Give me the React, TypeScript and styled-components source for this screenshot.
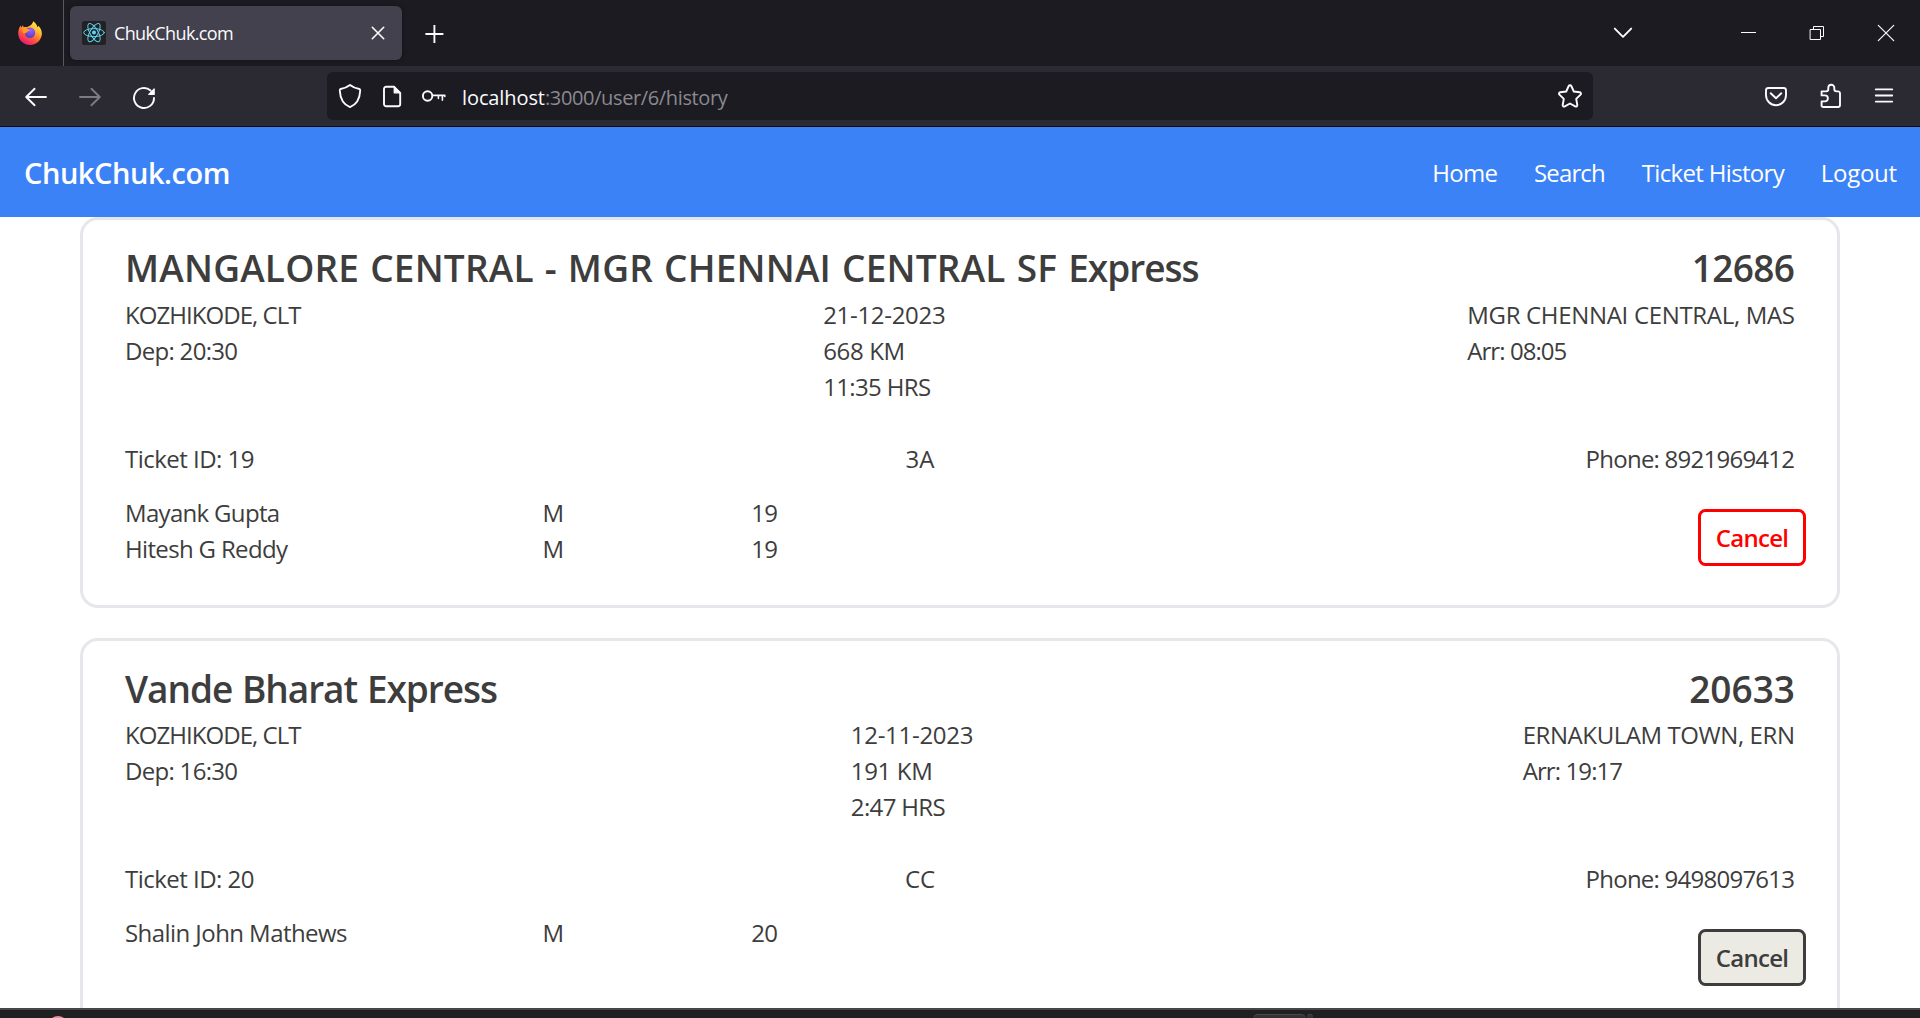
import React from 'react';
import styled, { createGlobalStyle } from 'styled-components';

const GlobalStyle = createGlobalStyle`
  *, *::before, *::after { box-sizing: border-box; }
  body {
    margin: 0;
    background: #fff;
    font-family: "Open Sans", "Noto Sans", sans-serif;
  }
`;

const Screen = styled.div`
  display: flex;
  flex-direction: column;
  width: 1920px;
  height: 1018px;
  overflow: hidden;
`;

/* Spacing between letters is tuned string by string; the margin gives back
   what the tracking takes after the last letter. */
const Text = styled.span<{ $track?: number }>`
  display: block;
  white-space: pre;
  letter-spacing: ${(p) => p.$track ?? 0}px;
  margin-right: ${(p) => Math.max(0, -(p.$track ?? 0))}px;
`;

/* ---------- browser window ---------- */

const TabBar = styled.div`
  display: flex;
  align-items: center;
  flex: none;
  height: 66px;
  padding: 0 22px 0 18px;
  background: #1c1b22;
`;

const Glyph = styled.svg<{ $ml?: number; $color?: string }>`
  display: block;
  flex: none;
  width: 24px;
  height: 24px;
  margin-left: ${(p) => p.$ml ?? 0}px;
  overflow: visible;
  fill: none;
  stroke: ${(p) => p.$color ?? '#fbfbfe'};
  stroke-width: 1.9;
  stroke-linecap: round;
  stroke-linejoin: round;
`;

const Separator = styled.div`
  width: 1px;
  height: 66px;
  margin: 0 6px 0 21px;
  background: #5a595f;
`;

const Tab = styled.div`
  display: flex;
  align-items: center;
  width: 332px;
  height: 54px;
  padding: 0 13px 0 12px;
  border-radius: 6px;
  background: #42414d;
  box-shadow: 0 0 4px rgba(0, 0, 0, 0.4);
`;

const TabTitle = styled(Text)`
  flex: 1;
  padding-left: 8px;
  color: #fbfbfe;
  font-size: 18px;
  line-height: 24px;
`;

const WindowControls = styled.div`
  display: flex;
  margin-left: auto;
`;

const Toolbar = styled.div`
  display: flex;
  align-items: center;
  flex: none;
  height: 61px;
  padding: 0 23px 0 24px;
  background: #2b2a33;
  border-bottom: 1px solid #0c0c0d;
`;

const AddressBar = styled.div`
  display: flex;
  align-items: center;
  width: 1266px;
  height: 48px;
  margin-left: 171px;
  padding: 0 11px;
  border-radius: 6px;
  background: #1c1b22;
`;

const Address = styled.div`
  display: flex;
  flex: 1;
  padding: 3px 0 0 16px;
  font-size: 20px;
  line-height: 28px;
  color: #8a8a8f;
`;

const Host = styled(Text)`
  color: #fbfbfe;
`;

/* ---------- site header ---------- */

const Header = styled.header`
  display: flex;
  align-items: center;
  justify-content: space-between;
  flex: none;
  height: 90px;
  padding: 0 23px 0 24px;
  background: #3b82f6;
  color: #fff;
`;

const Brand = styled(Text)`
  padding-top: 1px;
  font-size: 29px;
  font-weight: 600;
  line-height: 42px;
`;

const Nav = styled.nav`
  display: flex;
  gap: 36px;
  padding-top: 2px;
  font-size: 24px;
  line-height: 36px;
`;

/* ---------- tickets ---------- */

const Tickets = styled.main`
  display: flex;
  flex: 1;
  flex-direction: column;
  gap: 30px;
  min-height: 0;
  padding: 0 80px;
  overflow: hidden;
  color: #3d3d3d;
  font-size: 24px;
  line-height: 36px;
`;

const Row = styled.div`
  display: flex;
  justify-content: space-between;
`;

const TitleRow = styled(Row)`
  margin-bottom: 5px;
  font-size: 37px;
  font-weight: 600;
  line-height: 48px;
`;

const TrainName = styled.div`
  display: flex;
  word-spacing: 1.2px;
`;

const Card = styled.article`
  flex: none;
  height: 391px;
  padding: 24px 42px 0;
  border: 3px solid #e5e7eb;
  border-radius: 18px;

  & + & ${TitleRow} {
    margin-bottom: 4px;
  }
`;

const JourneyRow = styled(Row)`
  height: 144px;
`;

const BookingRow = styled(Row)`
  margin-bottom: 18px;
`;

const Passenger = styled.div`
  display: grid;
  grid-template-columns: 417.5px 208.75px auto;
`;

const CancelButton = styled.button<{ $disabled?: boolean }>`
  flex: none;
  width: 108px;
  height: 57px;
  margin: 14px -11px 0 0;
  padding: 0;
  border: 3px solid ${(p) => (p.$disabled ? '#3d3d3d' : '#ff0000')};
  border-radius: 7.5px;
  background: ${(p) => (p.$disabled ? '#ebebe3' : '#fff')};
  color: ${(p) => (p.$disabled ? '#3d3d3d' : '#ff0000')};
  font: 600 24px/36px "Open Sans", "Noto Sans", sans-serif;
  letter-spacing: -0.68px;
`;

/* ---------- desktop taskbar, only its upper edge shows ---------- */

const Taskbar = styled.div`
  display: flex;
  align-items: flex-start;
  flex: none;
  height: 10px;
  border-top: 2px solid #454646;
  background: #1f2021;
  overflow: hidden;
`;

const PinnedApp = styled.div`
  width: 20px;
  height: 20px;
  margin: 6px 0 0 48px;
  border-radius: 50%;
  background: #f08ba0;
`;

const RunningApp = styled.div<{ $ml: number; $w: number }>`
  width: ${(p) => p.$w}px;
  height: 20px;
  margin: 4px 0 0 ${(p) => p.$ml}px;
  border-top: 1px solid #4a4a4c;
  border-radius: 5px;
  background: #333334;
`;

type Line = [text: string, track: number];

interface Ticket {
  name: Line[];
  number: Line;
  from: Line[];
  trip: Line[];
  to: Line[];
  id: Line;
  coach: string;
  phone: Line;
  passengers: { name: Line; sex: string; age: string }[];
  disabled?: boolean;
}

const tickets: Ticket[] = [
  {
    name: [['MANGALORE CENTRAL - MGR CHENNAI CENTRAL SF ', 0.2], ['Express', -1]],
    number: ['12686', -0.6],
    from: [['KOZHIKODE, CLT', -0.95], ['Dep: 20:30', -0.7]],
    trip: [['21-12-2023', -0.3], ['668 KM', -0.35], ['11:35 HRS', -0.65]],
    to: [['MGR CHENNAI CENTRAL, MAS', -0.32], ['Arr: 08:05', -0.94]],
    id: ['Ticket ID: 19', -0.52],
    coach: '3A',
    phone: ['Phone: 8921969412', -0.76],
    passengers: [
      { name: ['Mayank Gupta', -0.68], sex: 'M', age: '19' },
      { name: ['Hitesh G Reddy', -0.66], sex: 'M', age: '19' },
    ],
  },
  {
    name: [['Vande Bharat Express', -1.04]],
    number: ['20633', 0],
    from: [['KOZHIKODE, CLT', -0.95], ['Dep: 16:30', -0.7]],
    trip: [['12-11-2023', -0.3], ['191 KM', -0.35], ['2:47 HRS', -0.65]],
    to: [['ERNAKULAM TOWN, ERN', -0.42], ['Arr: 19:17', -0.9]],
    id: ['Ticket ID: 20', -0.52],
    coach: 'CC',
    phone: ['Phone: 9498097613', -0.76],
    passengers: [{ name: ['Shalin John Mathews', -0.56], sex: 'M', age: '20' }],
    disabled: true,
  },
];

const links: Line[] = [['Home', -0.7], ['Search', -0.86], ['Ticket History', -0.66], ['Logout', -0.3]];

const Label = ({ line }: { line: Line }) => <Text $track={line[1]}>{line[0]}</Text>;

const Lines = ({ lines }: { lines: Line[] }) => (
  <div>
    {lines.map((line) => (
      <Label key={line[0]} line={line} />
    ))}
  </div>
);

const FirefoxLogo = () => (
  <Glyph viewBox="0 0 24 24">
    <defs>
      <linearGradient id="flame" x1="0.85" y1="0.05" x2="0.3" y2="1">
        <stop offset="0" stopColor="#fff44f" />
        <stop offset="0.35" stopColor="#ffb52e" />
        <stop offset="0.65" stopColor="#ff5a36" />
        <stop offset="1" stopColor="#e8127c" />
      </linearGradient>
      <radialGradient id="globe" cx="0.6" cy="0.25" r="0.8">
        <stop offset="0" stopColor="#a45cff" />
        <stop offset="1" stopColor="#4f3bc0" />
      </radialGradient>
    </defs>
    <path
      d="M15.2 0.2C18 2 19 4.3 19.4 6.2C20 5.9 20.3 5.3 20.3 4.8C22.7 7 24 10 23.9 12.8C23.6 19 18.6 24 12.2 24C5.4 24 0.3 18.8 0.2 12.4C0.2 9.4 1 7 2.6 4.6L3.2 6.6L5 4.2L5.6 6.3C6.7 6 8 6 9 6.3C11.2 4.8 14 4.5 15.2 0.2Z"
      fill="url(#flame)"
      stroke="none"
    />
    <circle cx="12" cy="11.8" r="5.2" fill="url(#globe)" stroke="none" />
    <path d="M4.2 7.2C6.2 6.2 8.4 6.6 9.4 8C10.2 8.4 11.6 8.5 12.2 8.8C12 9.8 10.4 10.3 9.8 10.6C9.4 11.8 8.2 11.4 7.2 12.4L5 12Z" fill="#ff9a26" stroke="none" />
  </Glyph>
);

const ReactLogo = () => (
  <Glyph viewBox="0 0 24 24" $color="#5ed3f3">
    <rect width="24" height="24" rx="2.5" fill="#222" stroke="none" />
    <g strokeWidth="1">
      {[0, 60, 120].map((angle) => (
        <ellipse key={angle} cx="12" cy="11.6" rx="10.3" ry="4" transform={`rotate(${angle} 12 11.6)`} />
      ))}
    </g>
    <circle cx="12" cy="11.6" r="2" fill="#5ed3f3" stroke="none" />
  </Glyph>
);

export default function App() {
  return (
    <Screen>
      <GlobalStyle />
      <TabBar>
        <FirefoxLogo />
        <Separator />
        <Tab>
          <ReactLogo />
          <TabTitle $track={-0.63}>ChukChuk.com</TabTitle>
          <Glyph viewBox="0 0 24 24" strokeWidth="1.6">
            <path d="M7.3 6.3L18.7 17.7M18.7 6.3L7.3 17.7" strokeWidth="1.6" />
          </Glyph>
        </Tab>
        <Glyph viewBox="0 0 24 24" $ml={20}>
          <path d="M12.4 4V22M3.4 13H21.4" strokeLinecap="butt" />
        </Glyph>
        <WindowControls>
          <Glyph viewBox="0 0 24 24">
            <path d="M3.8 7.6L12 15.8L20.2 7.6" />
          </Glyph>
          <Glyph viewBox="0 0 24 24" $ml={101}>
            <path d="M5 11.5H20" strokeWidth="1" strokeLinecap="butt" />
          </Glyph>
          <Glyph viewBox="0 0 24 24" $ml={45}>
            <path d="M5.5 8.5H15.5V18.5H5.5ZM8.5 8.5V5.5H18.5V15.5H15.5" strokeWidth="1" strokeLinejoin="miter" />
          </Glyph>
          <Glyph viewBox="0 0 24 24" $ml={45}>
            <path d="M4.3 4.3L19.7 19.7M19.7 4.3L4.3 19.7" strokeWidth="1.2" />
          </Glyph>
        </WindowControls>
      </TabBar>

      <Toolbar>
        <Glyph viewBox="0 0 24 24">
          <path d="M10.6 4.8L2.2 13L10.6 21.2M2.4 13H22" />
        </Glyph>
        <Glyph viewBox="0 0 24 24" $ml={30} $color="#7c7b82">
          <path d="M13.4 4.8L21.8 13L13.4 21.2M21.6 13H2" />
        </Glyph>
        <Glyph viewBox="0 0 24 24" $ml={30}>
          <path d="M22 14A10 10 0 1 1 18.6 6.5" />
          <path d="M22.2 5V10.4H16.8Z" fill="#fbfbfe" strokeWidth="1.2" />
        </Glyph>
        <AddressBar>
          <Glyph viewBox="0 0 24 24">
            <path d="M12 1C9.2 3.2 5.5 4.5 2.6 5C1.9 5.2 1.7 5.8 1.8 6.8C2.2 14.5 5.2 20.5 12 23.1C18.8 20.5 21.8 14.5 22.2 6.8C22.3 5.8 22.1 5.2 21.4 5C18.5 4.5 14.8 3.2 12 1Z" />
          </Glyph>
          <Glyph viewBox="0 0 24 24" $ml={18}>
            <path d="M14.2 2.8H6.2A2.2 2.2 0 0 0 4 5V20A2.2 2.2 0 0 0 6.2 22.2H18A2.2 2.2 0 0 0 20.2 20V8.8Z" />
            <path d="M14.2 3V8.8H20Z" fill="#fbfbfe" strokeWidth="1.2" />
          </Glyph>
          <Glyph viewBox="0 0 24 24" $ml={18}>
            <circle cx="5.6" cy="12" r="4.7" />
            <path d="M10.6 11.4H22.8V12.5M20.4 11.6V16.2M16.4 11.6V14.4" strokeWidth="1.6" />
          </Glyph>
          <Address>
            <Host $track={-0.1}>localhost</Host>
            <Text $track={-0.37}>:3000/user/6/history</Text>
          </Address>
          <Glyph viewBox="0 0 24 24">
            <path d="M10.7 2C11.2 0.9 12.8 0.9 13.3 2L15.8 7.5L21.8 8.3C23 8.5 23.4 9.8 22.6 10.6L18.2 14.9L19.3 21C19.5 22.2 18.3 23 17.2 22.4L12 19.5L6.8 22.4C5.7 23 4.5 22.2 4.7 21L5.8 14.9L1.4 10.6C0.6 9.8 1 8.5 2.2 8.3L8.2 7.5Z" />
          </Glyph>
        </AddressBar>
        <Glyph viewBox="0 0 24 24" $ml={171}>
          <path d="M4.4 4H19.6A2.4 2.4 0 0 1 22 6.4V11.2A10 10 0 0 1 2 11.2V6.4A2.4 2.4 0 0 1 4.4 4Z" />
          <path d="M6.7 9.3L12 14.3L17.3 9.3" />
        </Glyph>
        <Glyph viewBox="0 0 24 24" $ml={31}>
          <path d="M2.6 7.4H7.1C8.6 7.4 9.3 6.6 9.3 5.3V3.7A3 3 0 0 1 15.3 3.7V5.3C15.3 6.6 16 7.4 17.5 7.4H19A2 2 0 0 1 21 9.4V21A2 2 0 0 1 19 23H4.4A1.8 1.8 0 0 1 2.6 21.2V17.4H5.9A3 3 0 0 0 5.9 11.4H2.6Z" />
        </Glyph>
        <Glyph viewBox="0 0 24 24" $ml={29}>
          <path d="M3.8 5.4H20.2M3.8 11.5H20.2M3.8 17.6H20.2" />
        </Glyph>
      </Toolbar>

      <Header>
        <Brand $track={-0.45}>ChukChuk.com</Brand>
        <Nav>
          {links.map((line) => (
            <Label key={line[0]} line={line} />
          ))}
        </Nav>
      </Header>

      <Tickets>
        {tickets.map((t) => (
          <Card key={t.id[0]}>
            <TitleRow>
              <TrainName>
                {t.name.map((part) => (
                  <Label key={part[0]} line={part} />
                ))}
              </TrainName>
              <Label line={t.number} />
            </TitleRow>
            <JourneyRow>
              <Lines lines={t.from} />
              <Lines lines={t.trip} />
              <Lines lines={t.to} />
            </JourneyRow>
            <BookingRow>
              <Label line={t.id} />
              <Text>{t.coach}</Text>
              <Label line={t.phone} />
            </BookingRow>
            <Row>
              <div>
                {t.passengers.map((p) => (
                  <Passenger key={p.name[0]}>
                    <Label line={p.name} />
                    <Text>{p.sex}</Text>
                    <Text $track={-0.6}>{p.age}</Text>
                  </Passenger>
                ))}
              </div>
              <CancelButton $disabled={t.disabled}>Cancel</CancelButton>
            </Row>
          </Card>
        ))}
      </Tickets>

      <Taskbar>
        <PinnedApp />
        <RunningApp $ml={1185} $w={53} />
        <RunningApp $ml={1} $w={6} />
      </Taskbar>
    </Screen>
  );
}
